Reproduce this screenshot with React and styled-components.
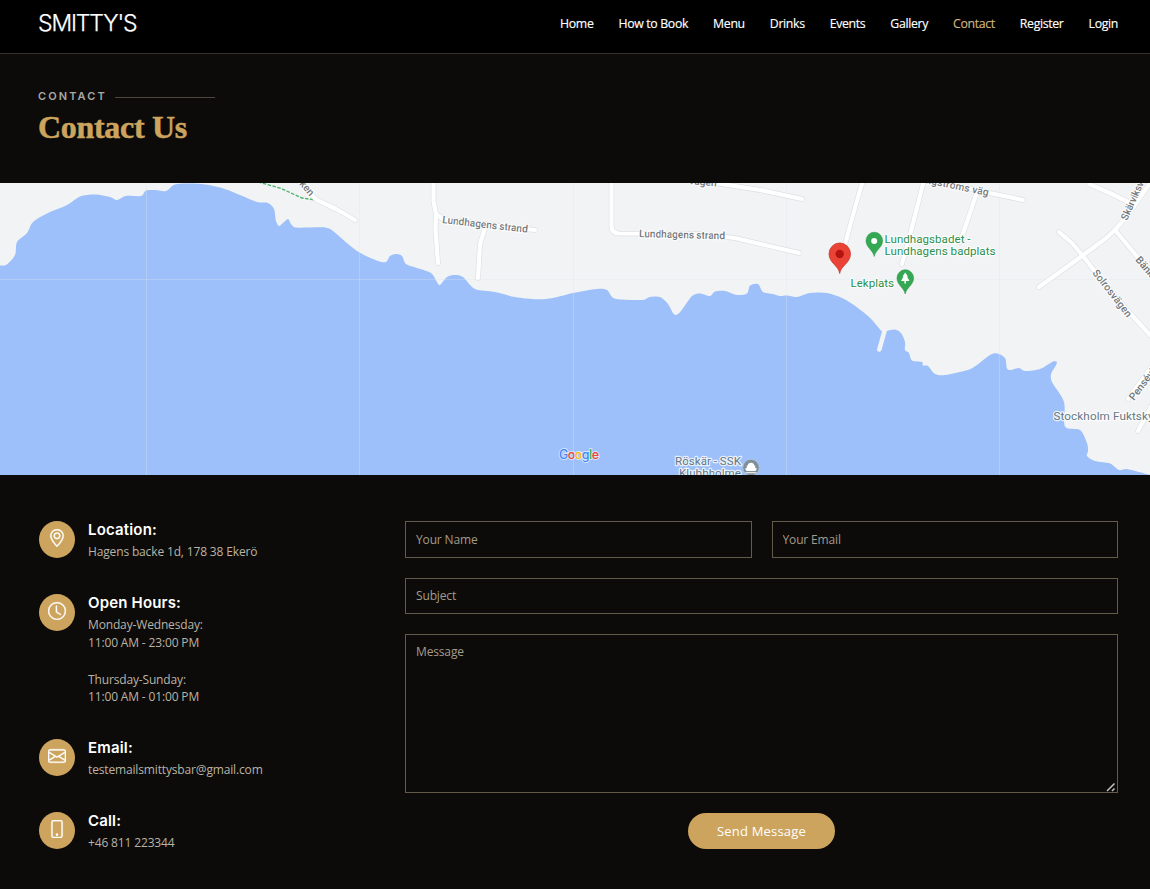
import React from "react";
import styled, { createGlobalStyle } from "styled-components";
import { BsGeoAlt, BsClock, BsEnvelope, BsPhone } from "react-icons/bs";

const GlobalStyle = createGlobalStyle`
  *, *::before, *::after { box-sizing: border-box; }
  body {
    margin: 0;
    background: #0c0b09;
    color: #fff;
    font-family: "Open Sans", sans-serif;
    overflow: hidden;
  }
`;

const Header = styled.header`
  display: flex;
  justify-content: space-between;
  height: 54px;
  padding: 0 32px 0 38px;
  background: #000;
  border-bottom: 1px solid #37332a;
`;

const Logo = styled.a`
  font: 300 23px/46px Inter, sans-serif;
  letter-spacing: -1.15px;
  color: #fff;
  -webkit-text-stroke: 0.25px currentColor;
`;

const Nav = styled.nav`
  display: flex;
  gap: 25px;
`;

const NavLink = styled.a`
  font-size: 12.3px;
  font-weight: 500;
  line-height: 47px;
  letter-spacing: -0.34px;
  white-space: nowrap;
  -webkit-text-stroke: 0.15px currentColor;
  color: ${(p) => (p.$active ? "#d3b47f" : "#fff")};
`;

const TitleBlock = styled.section`
  height: 129px;
  padding: 34px 38px 0;
`;

const Eyebrow = styled.h2`
  display: flex;
  align-items: center;
  gap: 8px;
  margin: 0;
  font: 600 11px/17px Inter, sans-serif;
  letter-spacing: 2.1px;
  color: #aaa8a3;

  &::after {
    content: "";
    width: 100px;
    height: 1px;
    margin-top: 2px;
    background: #4b473f;
  }
`;

const Title = styled.p`
  margin: 1px 0 0;
  font: 700 32px/42px "Liberation Serif", serif;
  letter-spacing: -0.3px;
  -webkit-text-stroke: 0.5px currentColor;
  color: #cda45e;
`;

const MapSvg = styled.svg`
  display: block;
  width: 100%;
  height: 292px;
  font-family: Roboto, sans-serif;
`;

const ContactArea = styled.section`
  display: grid;
  grid-template-columns: 346px 1fr;
  gap: 20px;
  padding: 46px 32px 40px 39px;
`;

const InfoList = styled.div`
  display: flex;
  flex-direction: column;
  gap: 36px;
`;

const InfoItem = styled.div`
  display: flex;
  gap: 13px;
`;

const IconBadge = styled.div`
  display: flex;
  flex: none;
  align-items: center;
  justify-content: center;
  width: 36px;
  height: 37px;
  padding-bottom: 3px;
  border-radius: 50%;
  background: #cda45e;
  color: #fff;

  svg { stroke: #fff; stroke-width: 0.35; }
`;

const InfoTitle = styled.h4`
  margin: 0 0 4px;
  font: 600 15px/18px Inter, sans-serif;
  letter-spacing: 0.17px;
  color: #fff;
`;

const InfoText = styled.p`
  margin: ${(p) => (p.$spaced ? "19px" : "0")} 0 0;
  font-size: 12px;
  line-height: ${(p) => (p.$spaced ? "17px" : "18px")};
  letter-spacing: -0.15px;
  color: #bab3a6;
  white-space: nowrap;
`;

const TextBody = styled.div`
  height: ${(p) => p.$height}px;
`;

const Form = styled.form`
  display: flex;
  flex-direction: column;
  align-items: center;
  gap: 20px;
`;

const FieldRow = styled.div`
  display: flex;
  gap: 20px;
  width: 100%;
`;

const fieldLook = `
  display: block;
  flex: 1;
  min-width: 0;
  width: 100%;
  margin: 0;
  border: 1px solid #625b4b;
  border-radius: 0;
  outline: none;
  background: #0c0b09;
  color: #fff;
  font: 12px "Open Sans", sans-serif;
  letter-spacing: -0.15px;
  &::placeholder { color: #a49b89; opacity: 1; }
`;

const Field = styled.input`
  ${fieldLook}
  height: ${(p) => p.$height}px;
  padding: 0 10px ${(p) => (p.$height === 36 ? 2 : 0)}px;
`;

const MessageWrap = styled.div`
  position: relative;
  width: 100%;
`;

const MessageField = styled.textarea`
  ${fieldLook}
  height: 159px;
  padding: 8px 10px;
  line-height: 18px;
  resize: none;
`;

const ResizeGrip = styled.svg`
  position: absolute;
  right: 2px;
  bottom: 1px;
  width: 10px;
  height: 10px;
  pointer-events: none;
`;

const SendButton = styled.button`
  width: 147px;
  height: 36px;
  padding: 0;
  border: 0;
  border-radius: 18px;
  background: #cda45e;
  color: #fff;
  font: 13px/34px "Open Sans", sans-serif;
  letter-spacing: 0.18px;
`;

const NAV_ITEMS = ["Home", "How to Book", "Menu", "Drinks", "Events", "Gallery", "Contact", "Register", "Login"];

const SHORE = [
  [-4, 265], [6, 265], [15, 255], [17, 242], [27, 233], [33, 222], [48, 213], [67, 205], [80, 196.5], [95, 194.5],
  [110, 197], [117, 200], [126, 196], [141, 196], [146, 190.5], [155, 190], [166, 191], [175, 184.5], [190, 183.5],
  [205, 184.5], [222, 188], [240, 195], [257, 202], [268, 203], [274, 209], [276, 221], [279, 226], [283, 223],
  [288, 219], [291, 224], [295, 227.5], [325, 227.5], [333, 231], [357, 251], [378, 261], [386, 262], [390, 256],
  [396, 254], [402, 256], [406, 264], [417, 268], [431, 273], [437, 282], [440, 285], [447, 277], [455, 275],
  [463, 277], [475, 289], [495, 292], [515, 297], [537, 299.3], [553, 298], [573, 293], [597, 289], [607, 290],
  [612, 297], [618, 299.3], [643, 300], [650, 297], [660, 297], [668, 304], [673, 313], [676, 315], [681, 311],
  [692, 296], [700, 293.5], [710, 296], [715, 291.5], [725, 291], [737, 295], [747, 293.5], [750, 285.5],
  [758, 284], [763, 292], [773, 294], [780, 296], [787, 295.5], [797, 297], [810, 293], [827, 293], [846, 300],
  [868, 316], [881, 330.5], [884, 333], [887, 331], [895, 329.5], [901, 333], [905, 342], [905, 350], [909, 353],
  [912, 360.5], [922, 362], [923, 365.5], [928, 366], [935, 374], [945, 375],
  [968, 370], [977, 365], [990, 355], [997, 353.5], [1005, 358], [1007, 368.5], [1011, 370], [1019, 368],
  [1025, 371], [1040, 369], [1053, 361.5], [1057, 362], [1055, 367], [1051, 374], [1052, 382], [1064, 402],
  [1065, 426.5], [1080, 430], [1087, 443], [1088, 451], [1087, 456], [1095, 461], [1110, 463.5], [1119, 470],
  [1127, 469], [1152, 475.5],
];

/* Catmull-Rom spline through a list of points, as cubic segments. */
function spline(points) {
  const k = 7;
  let d = `M${points[0][0]} ${points[0][1]}`;
  for (let i = 0; i < points.length - 1; i += 1) {
    const a = points[Math.max(0, i - 1)];
    const b = points[i];
    const c = points[i + 1];
    const e = points[Math.min(points.length - 1, i + 2)];
    // Handles are scaled down where a short segment follows a long one.
    const len = Math.hypot(c[0] - b[0], c[1] - b[1]);
    const s1 = Math.min(1 / k, (0.4 * len) / Math.hypot(c[0] - a[0], c[1] - a[1]));
    const s2 = Math.min(1 / k, (0.4 * len) / Math.hypot(e[0] - b[0], e[1] - b[1]));
    d += `C${b[0] + (c[0] - a[0]) * s1} ${b[1] + (c[1] - a[1]) * s1} ${c[0] - (e[0] - b[0]) * s2} ${c[1] - (e[1] - b[1]) * s2} ${c[0]} ${c[1]}`;
  }
  return d;
}

const ROADS = [
  "M300 183L317 200L338 210L355 220",
  "M433.5 180V201L436 214L435.5 230L438 263",
  "M436 214L443 219L500 226L535 230",
  "M485 228L480 244L478 278",
  "M611.5 180V227Q612 233 619 233.5L700 234L735 238L799 253",
  "M715 183L760 190L802 199",
  "M863 180L853 215L843 252",
  "M924 180L910 235L902 264",
  "M976 195L967 222L960 242",
  "M925 178L980 191L1023 200",
  "M1089 184L1112 194L1128 202",
  "M1152 180L1128 215L1114 231L1105 239L1082 256L1039 287",
  "M1059 232L1072 243L1083 256L1100 278L1128 311L1152 337",
  "M1115 230L1135 254L1152 274",
  "M1128 399L1152 366",
  "M1138 431L1152 405",
];

const LABELS = [
  { text: "ken", x: 299, y: 184, angle: 50 },
  { text: "Lundhagens strand", x: 442, y: 223, angle: 6.5, width: 86 },
  { text: "Lundhagens strand", x: 639, y: 237, angle: 1.5, width: 86 },
  { text: "vägen", x: 689, y: 184, angle: 5 },
  { text: "Engströms väg", x: 919.5, y: 182, angle: 11.5, width: 70 },
  { text: "Skärviksvägen", x: 1127, y: 221, angle: -66, width: 63 },
  { text: "Solrosvägen", x: 1092, y: 273, angle: 52, width: 57 },
  { text: "Bänkvägen", x: 1135, y: 260, angle: 50 },
  { text: "Pensévägen", x: 1134, y: 401, angle: -53 },
];

const GOOGLE = [["G", "#4285f4"], ["o", "#ea4335"], ["o", "#fbbc05"], ["g", "#4285f4"], ["l", "#34a853"], ["e", "#ea4335"]];

function Halo({ children, ...rest }) {
  return (
    <text stroke="#fff" strokeOpacity=".75" strokeWidth="2.5" strokeLinejoin="round" paintOrder="stroke" {...rest}>
      {children}
    </text>
  );
}

function ShoreMap() {
  return (
    <MapSvg viewBox="0 183 1150 292" preserveAspectRatio="none">
      <rect x="0" y="183" width="1150" height="292" fill="#f1f3f4" />
      <path d={`${spline(SHORE)}V480H-4Z`} fill="#9dc0fa" />
      <path d="M884.5 331L879.3 349.5" stroke="#f1f3f4" strokeWidth="4.6" strokeLinecap="round" />
      <path d="M146.5 183V475M359.5 183V475M573.5 183V475M786.5 183V475M999.5 183V475M0 279.5H1150" stroke="#dfe5ec" strokeOpacity=".32" fill="none" />
      <path d="M258 182L280 188L302 198L315 200" fill="none" stroke="#4bb36b" strokeWidth="1.3" strokeDasharray="3.5 1.5" />
      <g fill="none" strokeLinecap="round" strokeLinejoin="round">
        <path d={ROADS.join("")} stroke="#dcdfe2" strokeWidth="5.4" />
        <path d={ROADS.join("")} stroke="#fff" strokeWidth="4.2" />
      </g>
      <g fontSize="10.3" fontWeight="500" fill="#74787b">
        {LABELS.map((l) => (
          <Halo key={`${l.text}${l.x}`} x={l.x} y={l.y} textLength={l.width} transform={`rotate(${l.angle} ${l.x} ${l.y})`}>
            {l.text}
          </Halo>
        ))}
      </g>
      <g fontSize="11.7" fill="#2c8f49">
        <Halo x="884.5" y="243" textLength="86">Lundhagsbadet -</Halo>
        <Halo x="884.5" y="255" textLength="111">Lundhagens badplats</Halo>
        <Halo x="850.5" y="286.5" textLength="43.5">Lekplats</Halo>
      </g>
      <g fontSize="11.7" fill="#647783">
        <Halo x="1053.5" y="420" letterSpacing=".1">Stockholm Fuktskydd</Halo>
        <Halo x="675" y="465" textLength="66">Röskär - SSK</Halo>
        <Halo x="679" y="477" textLength="62">Klubbholme</Halo>
      </g>
      <path d="M839.7 273.5C839 266 829 263 829 254A10.7 11 0 0 1 850.5 254C850.5 263 840.5 266 839.7 273.5Z" fill="#ea4335" stroke="#c5352b" strokeWidth=".7" />
      <circle cx="839.7" cy="254" r="4.2" fill="#b31412" />
      <path d="M874.2 256.5C873 250 866 247.5 866 240.5A8.3 8.3 0 0 1 882.6 240.5C882.6 247.5 875.4 250 874.2 256.5Z" fill="#34a853" stroke="#258d42" strokeWidth=".5" />
      <circle cx="874.2" cy="241" r="3" fill="#fff" />
      <path d="M905.2 294C904 287.5 897 285 897 278A8.3 8.3 0 0 1 913.6 278C913.6 285 906.4 287.5 905.2 294Z" fill="#34a853" stroke="#258d42" strokeWidth=".5" />
      <path d="M905.2 272.5L908 276.5H907L909.5 281H906V283.5H904.4V281H901L903.5 276.5H902.5Z" fill="#fff" />
      <circle cx="751" cy="467.5" r="8.3" fill="#7f909b" stroke="#b9cbe0" strokeWidth=".8" />
      <path d="M746.8 468V465.5H747.8Q748 462.8 751 462.8T754.2 465.5H755.2V468L757 468.6L755.5 471H746.5L745 468.6ZM745.5 472.3H756.5V473.3H745.5Z" fill="#fff" />
      <text x="559" y="459" fontFamily="Inter, sans-serif" fontSize="12.5" fontWeight="500" textLength="40" stroke="#fff" strokeOpacity=".6" strokeWidth="1.8" paintOrder="stroke">
        {GOOGLE.map(([letter, color], i) => (
          <tspan key={i} fill={color}>{letter}</tspan>
        ))}
      </text>
    </MapSvg>
  );
}

function Info({ icon: Icon, title, height, children }) {
  return (
    <InfoItem>
      <IconBadge><Icon size={18} /></IconBadge>
      <TextBody $height={height}>
        <InfoTitle>{title}</InfoTitle>
        {children}
      </TextBody>
    </InfoItem>
  );
}

export default function App() {
  return (
    <>
      <GlobalStyle />
      <Header>
        <Logo>SMITTY'S</Logo>
        <Nav>
          {NAV_ITEMS.map((item) => (
            <NavLink key={item} $active={item === "Contact"}>{item}</NavLink>
          ))}
        </Nav>
      </Header>
      <TitleBlock>
        <Eyebrow>CONTACT</Eyebrow>
        <Title>Contact Us</Title>
      </TitleBlock>
      <ShoreMap />
      <ContactArea>
        <InfoList>
          <Info icon={BsGeoAlt} title="Location:" height={37}>
            <InfoText>Hagens backe 1d, 178 38 Ekerö</InfoText>
          </Info>
          <Info icon={BsClock} title="Open Hours:" height={109}>
            <InfoText>Monday-Wednesday:<br />11:00 AM - 23:00 PM</InfoText>
            <InfoText $spaced>Thursday-Sunday:<br />11:00 AM - 01:00 PM</InfoText>
          </Info>
          <Info icon={BsEnvelope} title="Email:" height={37}>
            <InfoText>testemailsmittysbar@gmail.com</InfoText>
          </Info>
          <Info icon={BsPhone} title="Call:" height={37}>
            <InfoText>+46 811 223344</InfoText>
          </Info>
        </InfoList>
        <Form>
          <FieldRow>
            <Field $height={37} placeholder="Your Name" />
            <Field $height={37} placeholder="Your Email" />
          </FieldRow>
          <FieldRow>
            <Field $height={36} placeholder="Subject" />
          </FieldRow>
          <MessageWrap>
            <MessageField placeholder="Message" />
            <ResizeGrip viewBox="0 0 10 10">
              <path d="M1 9L8.5 1.5M6 9L8.5 6.5" stroke="#c4c2be" strokeWidth="1.5" fill="none" />
            </ResizeGrip>
          </MessageWrap>
          <SendButton type="button">Send Message</SendButton>
        </Form>
      </ContactArea>
    </>
  );
}
